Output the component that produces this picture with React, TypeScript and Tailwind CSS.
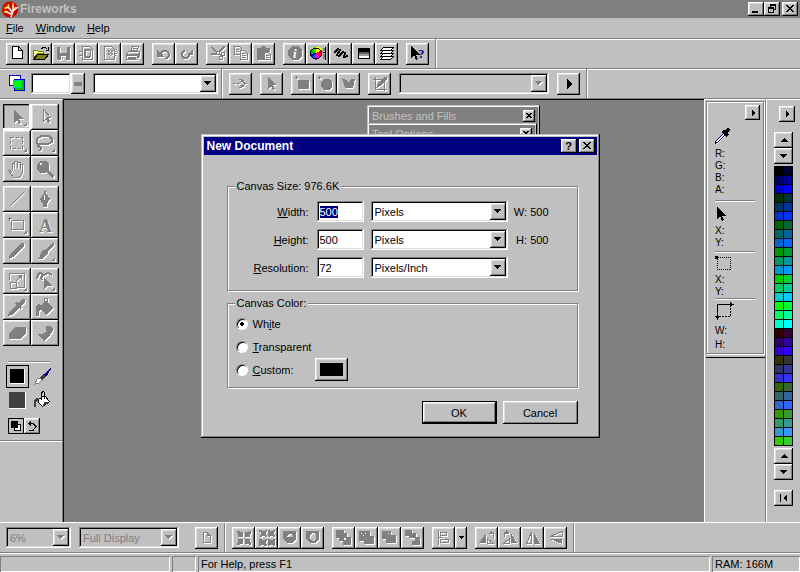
import React, { useEffect, useRef } from 'react';

const RAISED = 'bg-[#c0c0c0] shadow-[inset_-1px_-1px_0_#000,inset_1px_1px_0_#fff,inset_-2px_-2px_0_#808080,inset_2px_2px_0_#dfdfdf]';
const SUNKEN = 'shadow-[inset_-1px_-1px_0_#fff,inset_1px_1px_0_#808080,inset_-2px_-2px_0_#dfdfdf,inset_2px_2px_0_#000]';
const BAR = 'border-b border-[#808080] shadow-[0_1px_0_#fff]';
const MONO = '#808080';

type IconProps = { children: React.ReactNode; size?: number; off?: boolean };

// disabled icons are grey with a white copy one pixel down and right
const Icon = ({ children, size = 16, off = false }: IconProps) => (
    <svg className="overflow-visible" width={size} height={size} viewBox={`0 0 ${size} ${size}`} shapeRendering="crispEdges" fill="none" aria-hidden="true">
        {off && <g color="#fff" transform="translate(1 1)">{children}</g>}
        <g color={off ? MONO : '#000'}>{children}</g>
    </svg>
);

const F = ({ d }: { d: string }) => <path d={d} fill="currentColor" fillRule="evenodd" />;
const S = ({ d, w = 1 }: { d: string; w?: number }) => <path d={d} stroke="currentColor" strokeWidth={w} />;

const icons = {
    page: <path d="M2.5 .5h6l4 4v8h-10zM8.5 .5v4h4" fill="#fff" stroke="#000" />,
    open: (
        <>
            <path d="M.5 12.5v-8h4l1 1h5v2h-6z" fill="#ffff99" stroke="#808000" />
            <path d="M.5 13.5l4-5h11l-4 5z" fill="#808000" stroke="#000" />
            <path d="M8.5 2.5l2-1h2l2 2M15.5 1v3h-3" stroke="#000" />
        </>
    ),
    save: <F d="M1 1h13v13H2l-1-1zM4 1v6h7V1zM5 10v4h5v-4zM6 11h1v2h-1z" />,
    importer: (
        <>
            <S d="M3.5 .5h7l3 3v10h-10zM6.5 4.5h5v6h-5z" />
            <F d="M0 5h4v1H0zM0 9h4v1H0zM5 3h2v9H5zM7 3h4v2H7zM7 10h4v2H7z" />
        </>
    ),
    exporter: (
        <>
            <S d="M2.5 .5h7l3 3v10h-10z" />
            <F d="M6 4h2v2H6zM9 4h2v2H9zM6 7h2v2H6zM9 7h2v2H9zM12 7h3v1h-3zM12 5h2v1h-2zM12 9h2v1h-2zM8 6h1v1H8zM8 9h1v1H8z" />
        </>
    ),
    print: (
        <>
            <S d="M5.5 6l2-5.5h6l-2 5.5M8 2.5h4M7 4.5h4M1.5 7.5l2-2h11v5l-3 3h-10z" />
            <F d="M1 8h11v2H1zM3 11h8v2H3zM12 8l2-2v4l-2 2z" />
        </>
    ),
    undo: <><F d="M1 4v7h7L6 9l1-1H5z" /><S d="M4 8c1-2 3-3 5-3s4 1 4 4c0 2-2 3-4 3" w={2} /></>,
    redo: <><F d="M14 3v6H8z" /><S d="M10 7c1 2 0 5-3 5s-5-2-4-5c0-1 2-2 3-2" w={2} /></>,
    cut: (
        <>
            <F d="M0 1l2 0 9 7v2L8 9zM13 0h2v2L7 9H1V7h5z" />
            <circle cx="13" cy="8" r="2" stroke="currentColor" />
            <circle cx="11" cy="12" r="2" stroke="currentColor" />
        </>
    ),
    copy: <><S d="M7 8.5H1.5v-8h5l2 2v1" /><S d="M7.5 4.5h4l3 3v6h-7zM3 3.5h3M3 5.5h3M9 7.5h3M9 9.5h4M9 11.5h4" /></>,
    paste: <><F d="M1 2h4l1-2h3l1 2h4v4H8v8H1z" /><S d="M8.5 6.5h4l2 2v5h-6zM10 9.5h3M10 11.5h3" /></>,
    info: (
        <>
            <F d="M5 0h6l4 4v6l-4 4H5l-4-4V4z" />
            <text x="6" y="12" fontSize="13" fontWeight="bold" fontStyle="italic" fontFamily="Liberation Serif, serif" fill="#fff">i</text>
        </>
    ),
    mixer: (
        <>
            <path d="M6 7V1h3l3 3z" fill="#ff0" /><path d="M6 7L2 3l2-2h2z" fill="#0f0" />
            <path d="M6 7L0 9V4l2-1z" fill="#0c0" /><path d="M6 7L0 8l2 4z" fill="#00f" />
            <path d="M6 7l-4 5 4 2z" fill="#06f" /><path d="M6 7v7l4-2z" fill="#f0f" /><path d="M6 7l6-3v5l-2 3z" fill="#f03" />
            <circle cx="6" cy="7.5" r="5.5" stroke="#000" />
            <path d="M14 2v3M14 8v5" stroke="#808080" strokeWidth="2" /><path d="M15.5 1v13M13 6.5h3" stroke="#000" />
        </>
    ),
    squiggle: <S d="M1 7l4-4 2 1-3 5 2 1 4-4 2 1-1 4 4-1" w={2} />,
    gradient: (
        <>
            <path d="M2.5 2.5h11v10h-11z" fill="#fff" stroke="#000" />
            <path d="M3 3h10v3H3z" fill="#000" /><path d="M3 6h10v2H3z" fill="#606060" /><path d="M3 8h10v2H3z" fill="#a0a0a0" />
        </>
    ),
    layers: <path d="M4.5 10.5h10l-3 3H1.5zM4.5 7.5h10l-3 3H1.5zM4.5 4.5h10l-3 3H1.5zM4.5 1.5h10l-3 3H1.5z" fill="#fff" stroke="#000" />,
    help: (
        <>
            <F d="M1 0v12l3-3 2 5 2-1-2-4h4z" />
            <text x="8" y="12" fontSize="13" fontWeight="bold" fontFamily="Liberation Serif, serif" fill="#000080">?</text>
        </>
    ),
    joint: <S d="M0 7.5h3M4 7.5h3M6.5 3l4 2 1 3-1 2-4 2M7 5.5h3M7 9.5h3M11 7.5h3" />,
    arrow: <F d="M4 1v12l3-3 2 4 2-1-2-4h4z" />,
    addRect: <F d="M3 4h11v9H3zM1 0h1v1h1v1H2v1H1V2H0V1h1z" />,
    addOval: <F d="M6 3h5l3 3v5l-3 3H6l-3-3V6zM1 0h1v1h1v1H2v1H1V2H0V1h1z" />,
    addPoly: <F d="M1 2l4 2 3 3 2-4 4 0-2 9H4z" />,
    edit: <><S d="M3.5 1v12.5H15M1 3.5h11.5V15" /><F d="M4 12l2-5 7-6h2v2l-7 7z" /></>,
    doc: <><S d="M4.5 2.5h4l3 3v7h-7z" /><F d="M8 2v4h4z" /></>,
    group: <F d="M1 1h2l1 1h3v5H2V4L1 3zM9 2h3l1-1h2v2l-1 1v3H9zM2 9h5v5H4l-1 1H1v-2l1-1zM9 9h5v3l1 1v2h-2l-1-1H9z" />,
    ungroup: <F d="M0 0h3v1h3V0h2v2H7v3h1v2H6V6H3v1H1V5h1V2H0zM9 0h2v1h3V0h2v2h-1v3h1v2h-2V6h-3v1H9zM0 9h3v1h3V9h2v2H7v3h1v2H5v-1H2v1H0zM9 9h2v1h3V9h2v7h-2v-1h-3v1H9z" />,
    join: <F d="M1 1h13v8l-4 4H5L1 9zM5 6l2-2h2l2 2v1H5z" />,
    split: <F d="M1 1h13v8l-4 4H5L1 9zM5 5v4l2 2h2l2-2V5L9 3H7z" />,
    front: <F d="M0 0h8v3h3v4h4v8H7v-4H3V8H0zM8 8h2v2H8z" />,
    forward: <F d="M0 1h11v5h4v8H5v-3H0zM2 3h1v1H2zM4 5h1v1H4zM6 3h1v1H6z" />,
    backward: <F d="M0 1h9v4h5v8H4V9H0zM6 3h1v1H6z" />,
    back: <F d="M0 0h7v3h4v4h4v8H7v-4h3V8H4V6H0z" />,
    align: <><S d="M2.5 0v15M4.5 2.5h6v3h-6zM4.5 9.5h8v3h-8z" /><F d="M3 7h4v1H3z" /></>,
    rotL: <><F d="M7 3v10H0zM10 3l3-3v2l2 2h-5z" /><S d="M8.5 8.5v5h6zM11 3.5h3v4" /></>,
    rotR: <><F d="M9 3v10h6zM7 3L4 0v2L2 4h5z" /><S d="M7.5 8.5v5H1.5zM5 2.5H2.5V7" /></>,
    flipH: <><S d="M6.5 2v11.5h-5z" /><F d="M9 2v12h6z" /></>,
    flipV: <><S d="M14 6.5V1.5L2 6.5z" /><F d="M14 9v5L2 9z" /></>,
};

const tools = {
    pointer: <F d="M7 3v13l3-3 2 4 2-1-2-4h4zM20 15v4h-4z" />,
    subselect: <S d="M8.5 2.5v12l3-3 2 4 1-1-2-4h3z" />,
    marquee: <><path d="M3.5 4.5h12v11h-12z" stroke="currentColor" strokeDasharray="3 2" /><F d="M20 15v4h-4z" /></>,
    lasso: <><S d="M5 12l-3-2V6l4-3h8l3 3v3l-4 2H5l-2 2 3 2-1 3" w={2} /><F d="M20 15v4h-4z" /></>,
    hand: <S d="M5.5 11V4.5h2V9V2.5h3V9V3.5h3V10V5.5h2v8l-3 5h-6l-5-7 1-1 3 3" />,
    zoom: <F d="M5 2h6l3 3v5l-1 1 6 6-2 2-6-6-1 1H5l-3-3V5zM5 4v2h2V4z" />,
    line: <S d="M3 17L17 3" />,
    pen: <F d="M9 2h2v2l4 6-3 5v3H8v-3l-3-5 4-6zM9 6h1v5H9z" />,
    rect: <><S d="M4.5 5.5h12v9h-12zM2.5 2v4M1 3.5h4" /><F d="M20 15v4h-4z" /></>,
    text: <text x="4" y="17" fontSize="18" fontWeight="bold" fontFamily="Liberation Serif, serif" fill="currentColor">A</text>,
    pencil: <F d="M2 18l1-5L14 2h3v3L6 16z" />,
    brush: <><F d="M11 8l6-6h2v2l-6 7 0 1-5 6H2l3-3 1-4 3-2zM20 16v4h-4z" /></>,
    scale: <><S d="M2.5 9V2.5h15v14H10M3.5 11.5h6v6h-6zM9 10l5-5" /><F d="M10 4h5v5zM20 16v4h-4z" /></>,
    freeform: <><S d="M2 8l1-5 3-1 2 2-2 3 1 2M9 4l4-2 4 2" w={2} /><F d="M9 6v12l3-3h5zM20 16v4h-4z" /></>,
    dropper: <F d="M1 19l1-4 7-7-1-2 2-1 1 1 4-4h3v3l-4 4 1 2-2 1-1-1-7 7z" />,
    bucket: <><F d="M6 8l5-4 8 7-8 7-5-5-2 1v5H1V9l2-2z" /><S d="M9.5 7V1.5h3V6" /></>,
    eraser: <F d="M8 4h11v6l-6 6H2v-6z" />,
    stamp: <F d="M11 3h5l2 3-1 4-3 1 2 1-7 6-6-7h4l4-2z" />,
};

type BtnProps = { name: string; off?: boolean; children: React.ReactNode };

const ToolButton = ({ name, off, children }: BtnProps) => (
    <button type="button" aria-label={name} disabled={off} className={`flex h-[22px] w-[23px] shrink-0 items-center justify-center ${RAISED}`}>
        <Icon off={off}>{children}</Icon>
    </button>
);

const Tool = ({ name, on, children }: { name: string; on?: boolean; children: React.ReactNode }) => (
    <button
        type="button"
        aria-label={name}
        disabled
        className={`flex h-[26px] w-7 items-center justify-center ${on ? 'shadow-[inset_-2px_-2px_0_#fff,inset_1px_1px_0_#000,inset_2px_2px_0_#808080]' : RAISED}`}
    >
        <Icon size={21} off>{children}</Icon>
    </button>
);

const Combo = ({ id, label, value, off, className }: { id: string; label?: string; value: string; off?: boolean; className: string }) => (
    <div className={`grid h-[21px] shrink-0 p-0.5 ${SUNKEN} ${off ? 'text-[#808080]' : 'bg-white'} ${className}`}>
        <select id={id} aria-label={label} disabled={off} className="col-start-1 row-start-1 h-[17px] w-full appearance-none bg-transparent px-0.5 outline-none">
            <option>{value}</option>
        </select>
        <span className={`pointer-events-none col-start-1 row-start-1 flex h-[17px] w-4 items-center justify-center justify-self-end ${RAISED}`}>
            <svg width="8" height="5" viewBox="0 0 8 5" shapeRendering="crispEdges" aria-hidden="true">
                {off && <path d="M1 1h7L4.5 5z" fill="#fff" />}
                <path d="M0 0h7L3.5 4z" fill={off ? MONO : '#000'} />
            </svg>
        </span>
    </div>
);

const Small = ({ name, className, d }: { name: string; className: string; d: string }) => (
    <button type="button" aria-label={name} className={`flex shrink-0 items-center justify-center ${RAISED} ${className}`}>
        <svg width="10" height="10" viewBox="0 0 10 10" shapeRendering="crispEdges" aria-hidden="true">
            <path d={d} fill="#000" fillRule="evenodd" />
        </svg>
    </button>
);

const CLOSE = 'M1 1h2v1h1v1h2v-1h1v-1h2v1h-1v1h-1v1h-1v1h1v1h1v1h1v1h-2v-1h-1v-1h-2v1h-1v1h-2v-1h1v-1h1v-1h1v-1h-1v-1h-1v-1h-1z';
const CLOSE_SMALL = 'M2 2h2v1h2V2h2v1H7v1H6v1h1v1h1v1H6V6H4v1H2V6h1V5h1V4H3V3H2z';
const UP = 'M5 3l4 4H1z';
const DOWN = 'M1 3h7L4.5 7z';
const RIGHT = 'M4 1l3 4-3 4z';

const Etch = ({ className = '' }: { className?: string }) => <div className={`h-0.5 border-b border-white bg-[#808080] ${className}`} />;

const Logo = () => (
    <svg width="18" height="17" viewBox="0 0 18 17" aria-hidden="true">
        <circle cx="8" cy="8.5" r="8" fill="#d00000" />
        <path d="M9 16l2-6 5-4M10 11L7 7 4 6M9 13L3 10M11 10l0-6" stroke="#fff" strokeWidth="1.500" fill="none" />
        <path d="M2 7h3M6 3l1 3M11 2v3M14 6l-2 2M2 11h3" stroke="#ffd000" strokeWidth="1.500" />
    </svg>
);

const MainToolbar = () => (
    <div className={`flex h-[30px] ${BAR}`}>
        <div className="flex items-center gap-2 border-r border-[#808080] pr-1.5 pl-1.5 shadow-[1px_0_0_#fff]">
            <div className="flex">
                <ToolButton name="New">{icons.page}</ToolButton>
                <ToolButton name="Open">{icons.open}</ToolButton>
                <ToolButton name="Save" off>{icons.save}</ToolButton>
                <ToolButton name="Import" off>{icons.importer}</ToolButton>
                <ToolButton name="Export" off>{icons.exporter}</ToolButton>
                <ToolButton name="Print" off>{icons.print}</ToolButton>
            </div>
            <div className="flex">
                <ToolButton name="Undo" off>{icons.undo}</ToolButton>
                <ToolButton name="Redo" off>{icons.redo}</ToolButton>
            </div>
            <div className="flex">
                <ToolButton name="Cut" off>{icons.cut}</ToolButton>
                <ToolButton name="Copy" off>{icons.copy}</ToolButton>
                <ToolButton name="Paste" off>{icons.paste}</ToolButton>
            </div>
            <div className="flex">
                <ToolButton name="Object Inspector" off>{icons.info}</ToolButton>
                <ToolButton name="Color Mixer">{icons.mixer}</ToolButton>
                <ToolButton name="Brush">{icons.squiggle}</ToolButton>
                <ToolButton name="Fill">{icons.gradient}</ToolButton>
                <ToolButton name="Layers">{icons.layers}</ToolButton>
            </div>
            <ToolButton name="Help">{icons.help}</ToolButton>
        </div>
    </div>
);

const UrlToolbar = () => (
    <div className="flex h-[30px] border-b border-[#808080]">
        <div className="flex items-center border-r border-[#808080] pr-[3px] pl-[9px] shadow-[1px_0_0_#fff]">
            <Icon size={17}>
                <path d="M.5 .5h11v10H.5z" fill="#fff" stroke="#0000c0" />
                <path d="M5.5 4.5h10v11h-10z" fill="#00c000" stroke="#0000c0" />
                <path d="M4 5h8v7H4z" fill="#0f0" stroke="#00c0c0" />
            </Icon>
            <input aria-label="Link" className={`ml-[5px] h-[21px] w-10 bg-white px-1 outline-none ${SUNKEN}`} />
            <button type="button" aria-label="No URL" className={`flex h-[21px] w-3.5 items-center justify-center ${RAISED}`}>
                <span className="h-1 w-2 bg-[#808080]" />
            </button>
            <Combo id="url" label="URL" value="" className="ml-2 w-[125px]" />
        </div>
        <div className="flex items-center gap-2 border-r border-[#808080] pr-1.5 pl-[7px] shadow-[1px_0_0_#fff]">
            <ToolButton name="Join" off>{icons.joint}</ToolButton>
            <ToolButton name="Select" off>{icons.arrow}</ToolButton>
            <div className="flex">
                <ToolButton name="Rectangle hotspot" off>{icons.addRect}</ToolButton>
                <ToolButton name="Circle hotspot" off>{icons.addOval}</ToolButton>
                <ToolButton name="Polygon hotspot" off>{icons.addPoly}</ToolButton>
            </div>
            <ToolButton name="Slice" off>{icons.edit}</ToolButton>
            <Combo id="target" label="Target" value="" off className="w-[150px]" />
            <ToolButton name="More"><path d="M6 3l5 5-5 5z" fill="#000" /></ToolButton>
        </div>
    </div>
);

const Toolbox = () => (
    <aside className="w-[63px] shrink-0 border-t border-r border-t-white border-r-[#808080]">
        <div className="flex flex-col gap-1 pt-1 pl-[3px]">
            <div className="grid w-14 grid-cols-2">
                <Tool name="Pointer" on>{tools.pointer}</Tool>
                <Tool name="Subselection">{tools.subselect}</Tool>
                <Tool name="Marquee">{tools.marquee}</Tool>
                <Tool name="Lasso">{tools.lasso}</Tool>
                <Tool name="Hand">{tools.hand}</Tool>
                <Tool name="Magnify">{tools.zoom}</Tool>
            </div>
            <div className="grid w-14 grid-cols-2">
                <Tool name="Line">{tools.line}</Tool>
                <Tool name="Pen">{tools.pen}</Tool>
                <Tool name="Rectangle">{tools.rect}</Tool>
                <Tool name="Text">{tools.text}</Tool>
                <Tool name="Pencil">{tools.pencil}</Tool>
                <Tool name="Brush">{tools.brush}</Tool>
            </div>
            <div className="grid w-14 grid-cols-2">
                <Tool name="Scale">{tools.scale}</Tool>
                <Tool name="Freeform">{tools.freeform}</Tool>
                <Tool name="Eyedropper">{tools.dropper}</Tool>
                <Tool name="Paint bucket">{tools.bucket}</Tool>
                <Tool name="Eraser">{tools.eraser}</Tool>
                <Tool name="Rubber stamp">{tools.stamp}</Tool>
            </div>
        </div>
        <Etch className="mt-[15px] ml-2 w-[42px]" />
        <div className="mt-0.5 flex items-center gap-1.5 pl-1.5">
            <button type="button" aria-label="Stroke color" className="h-[23px] w-[23px] border border-black p-[3px]">
                <span className="block h-full border-r border-b border-white bg-black" />
            </button>
            <Icon size={17}>
                <path d="M0 16l2-5 4-1 1 2-3 3z" fill="#fff" stroke="#808080" />
                <path d="M6 11l4-4" stroke="#404040" strokeWidth="3" />
                <path d="M9 7l6-7 1 1-5 8z" fill="#000080" />
            </Icon>
        </div>
        <div className="mt-[3px] flex items-center gap-2 pl-[9px]">
            <button type="button" aria-label="Fill color" className="h-[17px] w-[17px] border-r border-b border-white bg-[#404040]" />
            <Icon size={19}>
                <path d="M4.5 8.5l6-4 5 6-7 5-4-4z" fill="#fff" stroke="#000" />
                <path d="M7.5 9V1.5l2-1 1 1v6" stroke="#000" />
                <path d="M4 7H2L0 9v7h2v-5l2-1zM10 11l5 0-6 4z" fill="#404040" />
            </Icon>
        </div>
        <div className="mt-2 flex pl-2">
            <button type="button" aria-label="Default colors" className="flex h-4 w-4 items-center justify-center border border-black bg-[#c0c0c0]">
                <Icon size={12}>
                    <path d="M4.5 4.5h6v6h-6z" fill="#fff" stroke="#000" />
                    <path d="M1 1h7v7H1z" fill="#000" />
                </Icon>
            </button>
            <button type="button" aria-label="Swap colors" className={`flex h-4 w-4 items-center justify-center ${RAISED}`}>
                <Icon size={12}><S d="M2 3.5h5l3 3-3 4H3M4.5 1v5M3.5 2v3" /></Icon>
            </button>
        </div>
        <Etch className="mt-1.5" />
    </aside>
);

const InfoPanel = () => (
    <aside className="w-[62px] shrink-0 border-t border-r border-l border-white border-r-[#808080] pt-px pl-px text-[10px] leading-3">
        <div className="border-b border-black pr-px pb-[3px]">
            <div className="border border-[#808080] pb-0.5 pl-2 shadow-[inset_1px_1px_0_#fff,1px_1px_0_#fff]">
                <div className="flex justify-end pt-[3px] pr-[3px]">
                    <Small name="Info options" className="h-[15px] w-[15px]" d={RIGHT} />
                </div>
                <div className="mt-2">
                    <Icon size={16}>
                        <path d="M1 15L9 7" stroke="#fff" strokeWidth="3" />
                        <path d="M0 16l1-3 8-8M1 15l2-1 8-8" stroke="#000060" />
                        <path d="M8 3l5 5M10 5l4-4" stroke="#000" strokeWidth="3" />
                    </Icon>
                </div>
                <div className="mt-1 grid">
                    <span>R:</span>
                    <span>G:</span>
                    <span>B:</span>
                    <span>A:</span>
                </div>
                <Etch className="mt-1 w-10" />
                <div className="mt-[5px] pl-0.5">
                    <Icon size={14}><F d="M0 0v12l3-3 2 5 2-1-2-4h4z" /></Icon>
                </div>
                <div className="mt-1 grid">
                    <span>X:</span>
                    <span>Y:</span>
                </div>
                <Etch className="mt-0.5 w-10" />
                <div className="mt-0.5">
                    <Icon size={17}>
                        <path d="M2.5 2.5h13v12h-13z" stroke="#000" strokeDasharray="1 1" />
                        <path d="M0 1h3v3H0z" fill="#000" />
                    </Icon>
                </div>
                <div className="mt-0.5 grid">
                    <span>X:</span>
                    <span>Y:</span>
                </div>
                <Etch className="w-10" />
                <div className="mt-0.5">
                    <Icon size={19}>
                        <path d="M15.5 3v11.5H3" stroke="#000" strokeDasharray="2 1" />
                        <path d="M2.5 17V2.5H17" stroke="#000" />
                        <path d="M15 0l4 2.5-4 2.500zM0 14h5l-2.5 4z" fill="#000" />
                    </Icon>
                </div>
                <div className="mt-1 grid gap-0.5">
                    <span>W:</span>
                    <span>H:</span>
                </div>
            </div>
        </div>
    </aside>
);

const STEPS = ['00', '33', '66', '99', 'cc', 'ff'];
const swatches = Array.from({ length: 62 }, (_, i) => `#${STEPS[Math.floor(i / 36)]}${STEPS[Math.floor(i / 6) % 6]}${STEPS[i % 6]}`);

const Swatches = () => (
    <aside className="flex w-[34px] shrink-0 flex-col items-center border-t border-l border-white pt-1.5">
        <Small name="Swatch options" className="ml-1.5 h-4 w-4" d={RIGHT} />
        <Small name="Scroll up" className="mt-2.5 h-4 w-[19px]" d={UP} />
        <Small name="Scroll down" className="h-4 w-[19px]" d={DOWN} />
        <div className="mt-0.5 grid w-[19px] grid-cols-2 gap-px bg-black p-px">
            {swatches.map((c) => (
                <button key={c} type="button" aria-label={c} className="h-2" style={{ backgroundColor: c }} />
            ))}
        </div>
        <Small name="Previous" className="mt-0.5 h-4 w-[19px]" d={UP} />
        <Small name="Next" className="h-4 w-[19px]" d={DOWN} />
        <Small name="First" className="mt-2.5 h-4 w-[19px]" d="M1 1h1v8H1zM8 1v8L4 5z" />
    </aside>
);

const ViewToolbar = () => (
    <div className={`flex h-[31px] border-t border-t-white ${BAR}`}>
        <div className="flex items-center border-r border-[#808080] pr-1.5 pl-1.5 shadow-[1px_0_0_#fff]">
            <Combo id="zoom" label="Zoom" value="6%" off className="w-[65px]" />
            <Combo id="display" label="Display" value="Full Display" off className="mr-4 ml-2 w-[100px]" />
            <ToolButton name="Page preview" off>{icons.doc}</ToolButton>
        </div>
        <div className="flex items-center gap-2 border-r border-[#808080] pr-1.5 pl-[7px] shadow-[1px_0_0_#fff]">
            <div className="flex">
                <ToolButton name="Group" off>{icons.group}</ToolButton>
                <ToolButton name="Ungroup" off>{icons.ungroup}</ToolButton>
                <ToolButton name="Join paths" off>{icons.join}</ToolButton>
                <ToolButton name="Split paths" off>{icons.split}</ToolButton>
            </div>
            <div className="flex">
                <ToolButton name="Bring to front" off>{icons.front}</ToolButton>
                <ToolButton name="Bring forward" off>{icons.forward}</ToolButton>
                <ToolButton name="Send backward" off>{icons.backward}</ToolButton>
                <ToolButton name="Send to back" off>{icons.back}</ToolButton>
            </div>
            <div className="flex">
                <ToolButton name="Align" off>{icons.align}</ToolButton>
                <button type="button" aria-label="Align options" className={`flex h-[22px] w-3 items-center justify-center ${RAISED}`}>
                    <svg width="5" height="3" viewBox="0 0 5 3" shapeRendering="crispEdges" aria-hidden="true"><path d="M0 0h5L2.5 3z" /></svg>
                </button>
            </div>
            <div className="flex">
                <ToolButton name="Rotate left" off>{icons.rotL}</ToolButton>
                <ToolButton name="Rotate right" off>{icons.rotR}</ToolButton>
                <ToolButton name="Flip horizontal" off>{icons.flipH}</ToolButton>
                <ToolButton name="Flip vertical" off>{icons.flipV}</ToolButton>
            </div>
        </div>
    </div>
);

const PANE = 'shadow-[inset_1px_1px_0_#808080,inset_-1px_-1px_0_#fff]';

const StatusBar = () => (
    <footer className="flex h-[19px] shrink-0 gap-0.5 pt-[3px]">
        <div className={`w-[170px] ${PANE}`} />
        <div className={`w-6 ${PANE}`} />
        <div className={`flex-1 px-[3px] leading-4 ${PANE}`}>For Help, press F1</div>
        <div className={`w-[88px] px-[3px] leading-4 ${PANE}`}>RAM: 166M</div>
    </footer>
);

const FloatTitle = ({ children }: { children: string }) => (
    <div className="flex h-[17px] items-center justify-between pr-[3px] pl-[3px] text-[#c0c0c0]">
        {children}
        <Small name={`Close ${children}`} className="h-3 w-3" d={CLOSE_SMALL} />
    </div>
);

type RowProps = { id: string; label: React.ReactNode; value: string; unit: string; note?: string; inputRef?: React.Ref<HTMLInputElement> };

const SizeRow = ({ id, label, value, unit, note, inputRef }: RowProps) => (
    <div className="flex items-center">
        <label htmlFor={id} className="w-[81px] text-right">{label}</label>
        <input
            ref={inputRef}
            id={id}
            defaultValue={value}
            className={`ml-2 h-[21px] w-[47px] bg-white px-[3px] outline-none selection:bg-[#000080] selection:text-white ${SUNKEN}`}
        />
        <Combo id={`${id}-unit`} label="Unit" value={unit} className="ml-[7px] w-[137px]" />
        {note && <span className="ml-[5px] w-9 text-right whitespace-nowrap">{note}</span>}
    </div>
);

const Choice = ({ id, label, checked }: { id: string; label: React.ReactNode; checked?: boolean }) => (
    <div className="flex items-center gap-[5px]">
        <input
            type="radio"
            name="canvas-color"
            id={id}
            defaultChecked={checked}
            className="h-3 w-3 appearance-none rounded-full border border-[#808080] border-r-white border-b-white bg-white shadow-[inset_1px_1px_0_#000] checked:bg-[radial-gradient(circle,#000_2px,#fff_2px)]"
        />
        <label htmlFor={id}>{label}</label>
    </div>
);

const GROUP = 'border border-[#808080] shadow-[inset_1px_1px_0_#fff,1px_1px_0_#fff]';

const NewDocument = () => {
    const width = useRef<HTMLInputElement>(null);

    useEffect(() => {
        width.current?.focus();
        width.current?.select();
    }, []);

    return (
        <div className="fixed inset-0 flex items-center justify-center">
            <form role="dialog" aria-labelledby="dialog-title" className="w-[399px] bg-[#c0c0c0] p-[3px] shadow-[inset_-1px_-1px_0_#000,inset_1px_1px_0_#c0c0c0,inset_-2px_-2px_0_#808080,inset_2px_2px_0_#fff]">
                <div className="flex h-[18px] items-center bg-[#000080] pr-0.5 pl-[3px]">
                    <h1 id="dialog-title" className="flex-1 text-[12px] font-bold text-white">New Document</h1>
                    <button type="button" aria-label="Help" className={`h-3.5 w-4 text-[11px] leading-[13px] font-bold ${RAISED}`}>?</button>
                    <Small name="Close" className="ml-0.5 h-3.5 w-4" d={CLOSE} />
                </div>
                <div className="pt-6 pr-[19px] pb-[11px] pl-[23px]">
                    <fieldset className={`${GROUP} pb-3`}>
                        <legend className="ml-[7px] bg-[#c0c0c0] px-0.5 leading-3.5">Canvas Size: 976.6K</legend>
                        <div className="grid gap-[7px] pt-2">
                            <SizeRow id="width" inputRef={width} label={<><u>W</u>idth:</>} value="500" unit="Pixels" note="W: 500" />
                            <SizeRow id="height" label={<><u>H</u>eight:</>} value="500" unit="Pixels" note="H: 500" />
                            <SizeRow id="resolution" label={<><u>R</u>esolution:</>} value="72" unit="Pixels/Inch" />
                        </div>
                    </fieldset>
                    <fieldset className={`${GROUP} mt-[5px] pb-1.5`}>
                        <legend className="ml-[7px] bg-[#c0c0c0] px-0.5 leading-3.5">Canvas Color:</legend>
                        <div className="grid gap-[3px] pt-1.5 pl-2">
                            <Choice id="white" checked label={<>Wh<u>i</u>te</>} />
                            <div className="pt-1"><Choice id="transparent" label={<><u>T</u>ransparent</>} /></div>
                            <div className="flex h-[23px] items-center">
                                <div className="w-[79px]"><Choice id="custom" label={<><u>C</u>ustom:</>} /></div>
                                <button type="button" aria-label="Custom color" className={`h-[23px] w-[33px] p-[5px] ${RAISED}`}>
                                    <span className="block h-full bg-black" />
                                </button>
                            </div>
                        </div>
                    </fieldset>
                    <div className="mt-[13px] flex justify-end gap-1.5">
                        <button type="submit" className="h-[23px] w-[75px] border border-black shadow-[inset_-1px_-1px_0_#000,inset_1px_1px_0_#fff,inset_-2px_-2px_0_#808080,inset_2px_2px_0_#dfdfdf]">OK</button>
                        <button type="button" className={`h-[23px] w-[75px] ${RAISED}`}>Cancel</button>
                    </div>
                </div>
            </form>
        </div>
    );
};

export default function App() {
    return (
        <div className="flex min-h-screen flex-col bg-[#c0c0c0] font-['Liberation_Sans',Arial,sans-serif] text-[11px] leading-4 text-black">
            <header className="flex h-[18px] items-center bg-[#808080] pr-0.5 pl-0.5 text-[#c0c0c0]">
                <Logo />
                <span className="flex-1 text-[12px] font-bold">Fireworks</span>
                <Small name="Minimize" className="h-3.5 w-4" d="M1 7h6v2H1z" />
                <Small name="Restore" className="h-3.5 w-4" d="M3 0h6v6H7V5h1V2H4v1H3zM1 3h6v6H1zM2 5v3h4V5z" />
                <Small name="Close" className="ml-0.5 h-3.5 w-4" d={CLOSE} />
            </header>
            <nav className={`flex h-[21px] items-center gap-3 pl-1.5 ${BAR}`}>
                <a href="#file"><u>F</u>ile</a>
                <a href="#window"><u>W</u>indow</a>
                <a href="#help"><u>H</u>elp</a>
            </nav>
            <MainToolbar />
            <UrlToolbar />
            <div className="flex flex-1">
                <Toolbox />
                <main className="relative flex-1 overflow-hidden border-t border-l border-black bg-[#808080]">
                    <section className="absolute top-[5px] left-[303px] h-24 w-[173px] border border-[#c0c0c0] border-r-black p-px shadow-[inset_1px_1px_0_#fff,inset_-1px_0_0_#c0c0c0]">
                        <FloatTitle>Brushes and Fills</FloatTitle>
                    </section>
                    <section className="absolute top-[23px] left-[303px] h-24 w-[170px] border border-[#c0c0c0] border-r-black bg-[#808080] p-px shadow-[inset_1px_1px_0_#fff,inset_-1px_0_0_#c0c0c0]">
                        <FloatTitle>Tool Options</FloatTitle>
                    </section>
                </main>
                <InfoPanel />
                <Swatches />
            </div>
            <ViewToolbar />
            <StatusBar />
            <NewDocument />
        </div>
    );
}
